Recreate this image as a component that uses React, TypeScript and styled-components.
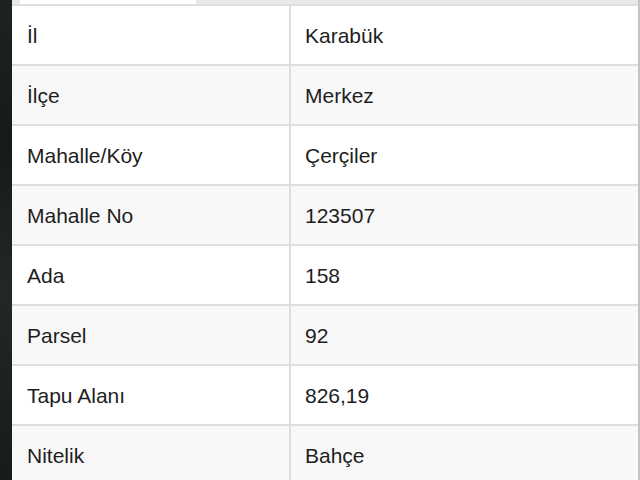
import React from "react";
import styled, { createGlobalStyle } from "styled-components";

const Global = createGlobalStyle`
  html, body { margin: 0; padding: 0; background: #ffffff; overflow: hidden; }
  body { font-family: "Liberation Sans", Arial, sans-serif; }
`;

const Page = styled.div`
  display: flex;
  width: 640px;
  height: 480px;
  overflow: hidden;
`;

const DarkStrip = styled.div`
  width: 12px;
  flex: none;
  background: linear-gradient(180deg, #1d2322 0%, #151a1a 30%, #222827 60%, #161b1b 100%);
`;

const Main = styled.div`
  flex: 1;
  display: flex;
  flex-direction: column;
  border-right: 2px solid #c4c4c4;
  background: #ffffff;
`;

const TopBar = styled.div`
  height: 4px;
  flex: none;
  background: #e8e8e8;
  display: flex;
  padding-left: 8px;
`;

const Tab = styled.div`
  width: 176px;
  background: #ffffff;
`;

const Table = styled.div`
  display: flex;
  flex-direction: column;
  border-top: 2px solid #dedede;
`;

const Row = styled.div<{ $alt: boolean }>`
  display: grid;
  grid-template-columns: 279px 1fr;
  height: 58px;
  border-bottom: 2px solid #dedede;
  background: ${(p) => (p.$alt ? "#f8f8f8" : "#ffffff")};
  flex: none;
`;

const Cell = styled.div<{ $first?: boolean }>`
  display: flex;
  align-items: center;
  padding-left: ${(p) => (p.$first ? "15px" : "14px")};
  padding-top: 2px;
  font-size: 21px;
  color: #1e1e1e;
  border-right: ${(p) => (p.$first ? "2px solid #dedede" : "none")};
  white-space: nowrap;
`;

const rows: [string, string][] = [
  ["İl", "Karabük"],
  ["İlçe", "Merkez"],
  ["Mahalle/Köy", "Çerçiler"],
  ["Mahalle No", "123507"],
  ["Ada", "158"],
  ["Parsel", "92"],
  ["Tapu Alanı", "826,19"],
  ["Nitelik", "Bahçe"],
];

export default function App() {
  return (
    <>
      <Global />
      <Page>
        <DarkStrip />
        <Main>
          <TopBar>
            <Tab />
          </TopBar>
          <Table>
            {rows.map(([k, v], i) => (
              <Row key={k} $alt={i % 2 === 1}>
                <Cell $first>{k}</Cell>
                <Cell>{v}</Cell>
              </Row>
            ))}
          </Table>
        </Main>
      </Page>
    </>
  );
}
